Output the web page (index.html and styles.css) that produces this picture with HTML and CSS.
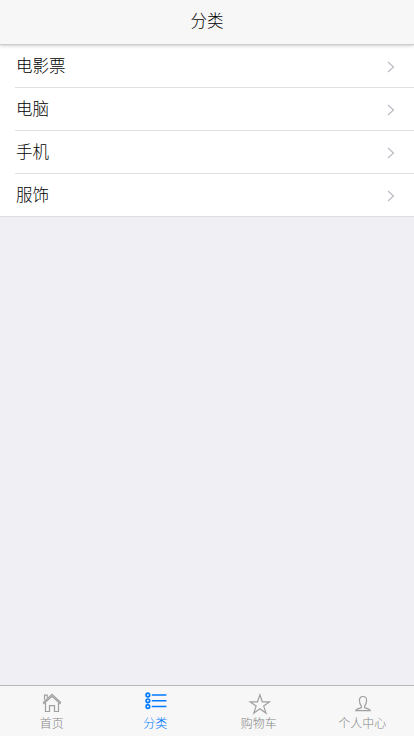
FILE: index.html
```html
<!DOCTYPE html>
<html lang="zh-CN">
<head>
<meta charset="utf-8">
<title>分类</title>
<link rel="stylesheet" href="styles.css">
</head>
<body>
<header class="bar"><h1>分类</h1></header>
<main class="content">
  <ul class="list">
    <li><a class="row"><span>电影票</span><svg class="chevron" viewBox="0 0 8 12"><path d="M1 1l5.5 5L1 11"/></svg></a></li>
    <li><a class="row"><span>电脑</span><svg class="chevron" viewBox="0 0 8 12"><path d="M1 1l5.5 5L1 11"/></svg></a></li>
    <li><a class="row"><span>手机</span><svg class="chevron" viewBox="0 0 8 12"><path d="M1 1l5.5 5L1 11"/></svg></a></li>
    <li><a class="row"><span>服饰</span><svg class="chevron" viewBox="0 0 8 12"><path d="M1 1l5.5 5L1 11"/></svg></a></li>
  </ul>
</main>
<nav class="tabs">
  <a class="tab">
    <svg class="icon" viewBox="0 0 24 24"><path d="M3 11.6L12 3.4l9 8.2M3.4 13L12 5.3l8.6 7.7M4.5 8.8V4.2h2.7v2.2M5.5 12v8.5h4v-5.8h5v5.8h4V12"/></svg>
    <span>首页</span>
  </a>
  <a class="tab active">
    <svg class="icon" viewBox="0 0 24 24"><g class="bullets"><circle cx="4.9" cy="4" r="1.8"/><circle cx="4.9" cy="9.8" r="1.8"/><circle cx="4.9" cy="15.5" r="1.8"/></g><path class="lines" d="M8.8 4h14.6M8.8 9.8h14.6M8.8 15.5h14.6"/></svg>
    <span>分类</span>
  </a>
  <a class="tab">
    <svg class="icon" viewBox="0 0 24 24"><path d="M12.9 3.8l2.4 7h7.4l-6 4.3 2.3 7-6.1-4.3-6.1 4.3 2.3-7-6-4.3h7.4z"/></svg>
    <span>购物车</span>
  </a>
  <a class="tab">
    <svg class="icon" viewBox="0 0 24 24"><path d="M11.4 15.2C9.9 13.3 9.4 11.4 9.4 9.3c0-2.4 1.3-3.8 3.6-3.8s3.6 1.4 3.6 3.8c0 2.1-.5 4-2 5.9v1.5c2.5.7 5 .9 5.6 2.9H5.8c.6-2 3.1-2.2 5.6-2.9z"/></svg>
    <span>个人中心</span>
  </a>
</nav>
</body>
</html>
```
FILE: styles.css
```css
* { box-sizing: border-box; }
body {
  margin: 0;
  height: 100vh;
  display: flex;
  flex-direction: column;
  background: #efeff4;
  font-family: "Noto Sans CJK SC", sans-serif;
  font-weight: 300;
  color: #000;
}
.bar {
  position: relative;
  z-index: 1;
  height: 44px;
  flex: none;
  background: #f7f7f7;
  box-shadow: 0 1px 0 #ccc, 0 1px 4px rgba(0, 0, 0, .3);
}
.bar h1 {
  margin: 0;
  font-size: 16.5px;
  font-weight: 300;
  line-height: 41px;
  text-align: center;
}
.content { flex: 1; }
.list {
  margin: 0;
  padding: 1px 0 0;
  list-style: none;
  background: #fff;
  border-bottom: 1px solid #dedee0;
}
.row {
  height: 43px;
  margin-left: 15px;
  padding: 0 19px 0 1px;
  display: flex;
  align-items: center;
  justify-content: space-between;
  border-bottom: 1px solid #e0e0e0;
  font-size: 16.5px;
}
.row span { line-height: 24px; padding-bottom: 2px; }
.list li:last-child .row { height: 42px; border-bottom: 0; }
.chevron {
  width: 8px;
  height: 12px;
  margin-top: 2px;
  fill: none;
  stroke: #b9bdc4;
  stroke-width: 1.2;
}
.tabs {
  height: 51px;
  flex: none;
  display: flex;
  background: #f7f7f7;
  border-top: 1px solid #b5b5ba;
}
.tab {
  flex: 1;
  display: flex;
  flex-direction: column;
  align-items: center;
  padding-top: 5px;
  color: #858585;
  font-size: 12px;
}
.tab span { line-height: 16px; }
.icon {
  width: 24px;
  height: 24px;
  fill: none;
  stroke: #a0a0a0;
  stroke-width: 1.2;
}
.active { color: #007aff; }
.active .icon { stroke: #007aff; }
.active .bullets { stroke-width: 1.7; }
.active .lines { stroke-width: 1.5; }
```
